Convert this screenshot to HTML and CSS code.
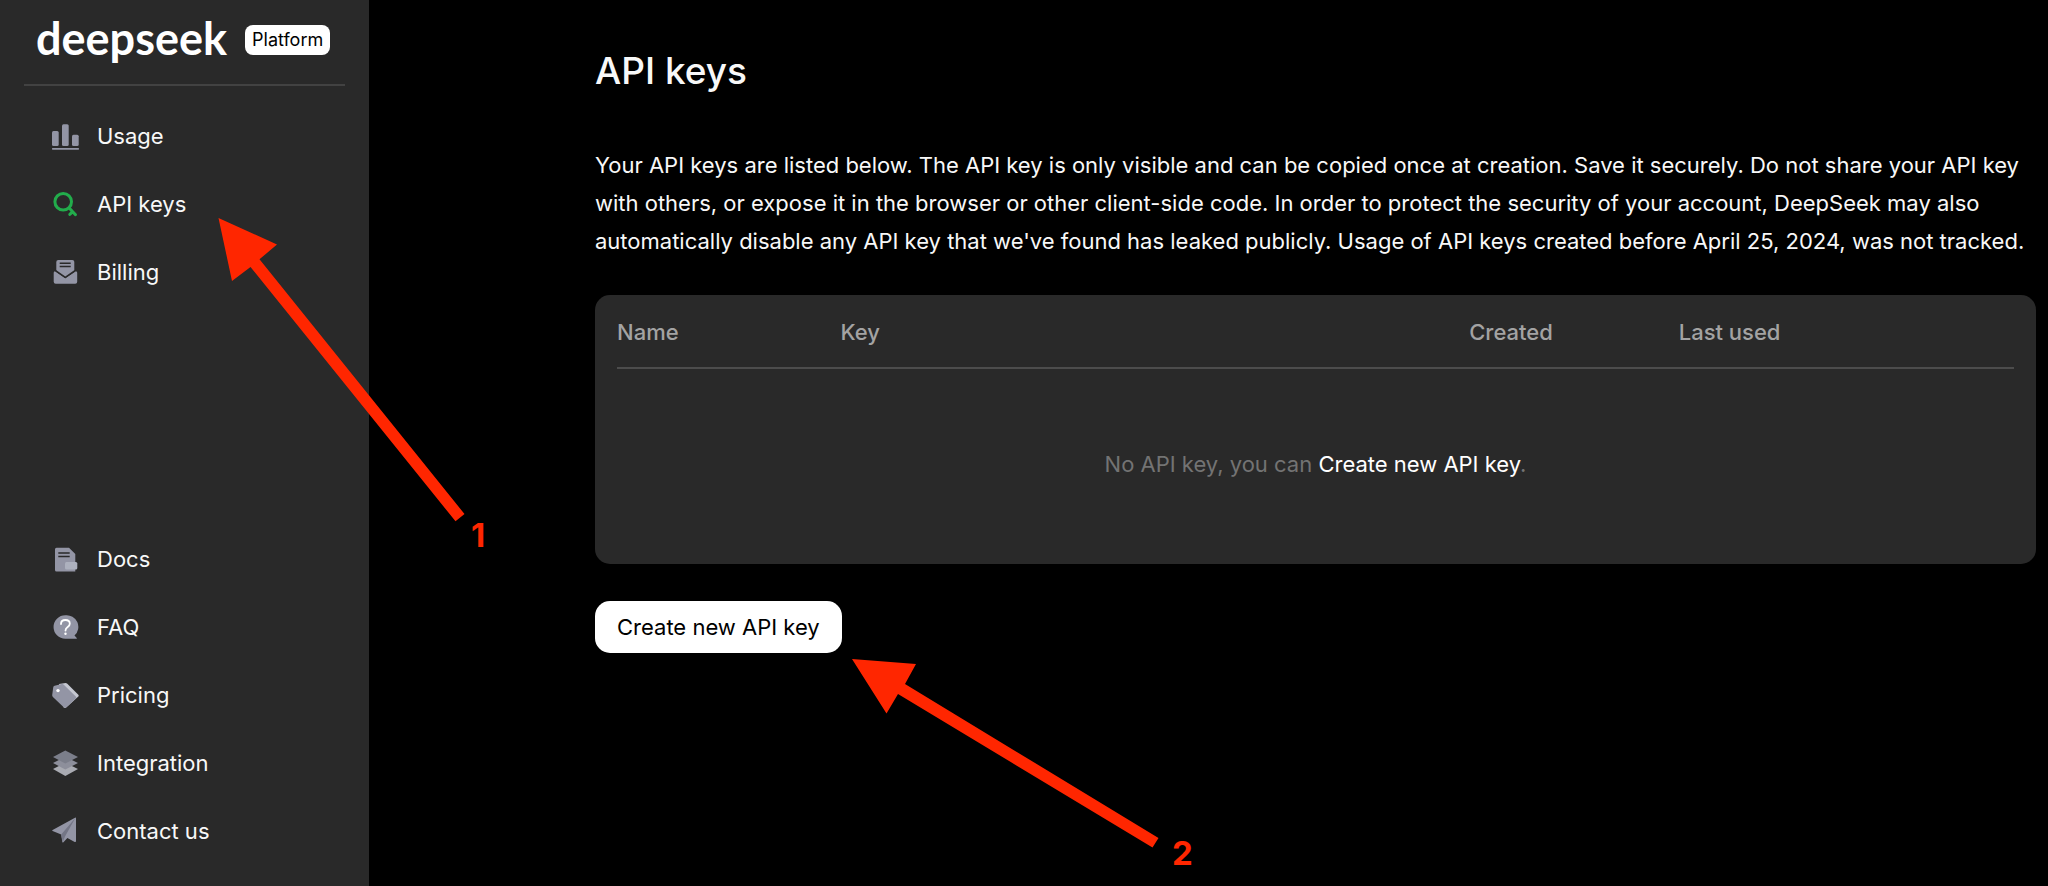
FILE: index.html
```html
<!DOCTYPE html>
<html lang="en">
<head>
<meta charset="utf-8">
<title>DeepSeek Platform</title>
<link rel="stylesheet" href="styles.css">
</head>
<body>
<div class="app">
  <aside class="sidebar">
    <div class="brand">
      <span class="wordmark">deepseek</span>
      <span class="badge">Platform</span>
    </div>
    <nav class="nav">
      <a class="nav-item" href="#usage">
        <svg class="icon" viewBox="0 0 28 28"><rect x="1" y="9" width="6.7" height="15" rx="1.5"/><rect x="11" y="2.3" width="6.7" height="21.7" rx="1.5"/><rect x="21" y="12.7" width="6.7" height="11.3" rx="1.5"/><rect x="1" y="26" width="27" height="1.7" rx=".6"/></svg>
        Usage
      </a>
      <a class="nav-item" href="#keys" aria-current="page">
        <svg class="icon icon-active" viewBox="0 0 28 28"><circle cx="12.2" cy="11.8" r="8.300"/><path d="M18.200 17.900l6.300 6.800M21.700 21.700l-2.900 2.700"/></svg>
        API keys
      </a>
      <a class="nav-item" href="#billing">
        <svg class="icon" viewBox="0 0 28 28"><path d="M7.3 2h14q2 0 2 2v9.2l-9 6.1-9-6.1V4q0-2 2-2z"/><path d="M4 13.3l10.3 7 10.5-7q1.4 0 1.4 1.5v9q0 2-2 2H4.7q-2 0-2-2v-9q0-1.5 1.3-1.5z"/><path class="cut" d="M8.7 5.3h11M8.7 8.5h11"/><path class="cut" d="M4.6 12.7l9.7 6.6 9.7-6.6"/></svg>
        Billing
      </a>
    </nav>
    <nav class="nav nav-bottom">
      <a class="nav-item" href="#docs">
        <svg class="icon" viewBox="0 0 28 28"><path d="M5.500 2.700H18L24.300 9v17.500H5.500Q4 26.500 4 25V4.200q0-1.500 1.500-1.500z"/><path class="cut" d="M7.300 8h11.400M7.300 11.500h11.400"/><rect class="light" x="14" y="17" width="12.300" height="7.500" rx="1.500"/></svg>
        Docs
      </a>
      <a class="nav-item" href="#faq">
        <svg class="icon" viewBox="0 0 28 28"><path d="M14.300 2.300a11.700 11.700 0 1 0 0 23.500H25.500q.8-.6 0-1.100l-2-2.100A11.700 11.700 0 0 0 14.300 2.300z"/><path class="mark" d="M10 11q0-4 4.400-4t4.400 3.700q0 1.700-2.100 3.200-2.200 1.500-2.200 3.600"/><circle class="dot" cx="14.500" cy="20.800" r="1.200"/></svg>
        FAQ
      </a>
      <a class="nav-item" href="#pricing">
        <svg class="icon" viewBox="0 0 28 28"><path class="edge" d="M8 2.900l6.600-.8q1 0 1.700.7l11 11q.8.900 0 1.700L15.500 26.300q-1.500 1.300-3 0z"/><path d="M3.600 4.800l7.300-1.700q1.100-.2 1.900.6L25 15.700q.7.800 0 1.500l-9.700 9q-1.300 1-2.600 0L1.900 16q-.8-.8-.7-2l1-7.500q.2-1.400 1.400-1.700z"/><circle class="dot" cx="7" cy="9.600" r="1.700"/></svg>
        Pricing
      </a>
      <a class="nav-item" href="#integration">
        <svg class="icon" viewBox="0 0 28 28"><path class="layer-low" d="M14.300 13.800L27 20l-12.700 7L2 20z"/><path class="layer-mid" d="M14.300 7.700L27 14l-12.700 6.500L2 14z"/><path class="layer-top" d="M14.300 1.600L27 8l-12.700 6.500L2 8z"/></svg>
        Integration
      </a>
      <a class="nav-item" href="#contact">
        <svg class="icon" viewBox="0 0 28 28"><path d="M24 .7q1-.4 1 .6V24q0 1.500-1.300.9L16.400 21l-4 4.200q-1.100.7-1.200-.6l-1-7L1.600 14q-1-.6 0-1.100z"/><path class="fold" d="M24.300 1L10.200 17.600l1.500 7.600L14 19.400z"/></svg>
        Contact us
      </a>
    </nav>
  </aside>

  <main class="main">
    <h1 class="title">API keys</h1>
    <p class="intro">Your API keys are listed below. The API key is only visible and can be copied once at creation. Save it securely. Do not share your API key with others, or expose it in the browser or other client-side code. In order to protect the security of your account, DeepSeek may also automatically disable any API key that we've found has leaked publicly. Usage of API keys created before April 25, 2024, was not tracked.</p>
    <section class="card">
      <table class="keys">
        <colgroup><col class="col-name"><col class="col-key"><col class="col-created"><col class="col-used"></colgroup>
        <thead>
          <tr><th scope="col">Name</th><th scope="col">Key</th><th scope="col">Created</th><th scope="col">Last used</th></tr>
        </thead>
        <tbody>
          <tr><td class="empty" colspan="4">No API key, you can <a class="empty-link" href="#create">Create new API key</a>.</td></tr>
        </tbody>
      </table>
    </section>
    <button class="create" type="button">Create new API key</button>
  </main>

  <svg class="annotations" width="1240" height="886" viewBox="0 0 1240 886">
    <path d="M218.500 218L277 244.500 259.500 259.300 464.500 514 455.500 521.300 250.500 267 232 281z"/>
    <text x="471" y="547">1</text>
    <path d="M852 659L916 664 905 684 1158.500 838 1152.500 847.500 898 694 886.500 713.500z"/>
    <text x="1172" y="865">2</text>
  </svg>
</div>
</body>
</html>
```
FILE: styles.css
```css
* {
  box-sizing: border-box;
}

body {
  margin: 0;
  background: #000;
  color: #f8f8f8;
  font-family: Inter, "Liberation Sans", sans-serif;
  font-size: 22px;
}

.app {
  position: relative;
  display: flex;
  min-height: 100vh;
}

/* Sidebar */
.sidebar {
  display: flex;
  flex-direction: column;
  flex: none;
  width: 369px;
  padding: 0 24px 21px;
  background: #292929;
}

.brand {
  display: flex;
  align-items: center;
  gap: 18px;
  height: 86px;
  padding: 0 12px 4px;
  border-bottom: 2px solid #424242;
}

.wordmark {
  padding-bottom: 4px;
  color: #fff;
  font-family: Lato, sans-serif;
  font-size: 45px;
  font-weight: 700;
  line-height: 48px;
}

.badge {
  padding: 0 7px;
  border-radius: 8px;
  background: #fff;
  color: #000;
  font-size: 18px;
  line-height: 30px;
}

.nav {
  display: flex;
  flex-direction: column;
  padding-top: 16px;
}

.nav-bottom {
  margin-top: auto;
}

.nav-item {
  display: flex;
  align-items: center;
  gap: 18px;
  height: 68px;
  padding-left: 27px;
  color: inherit;
  text-decoration: none;
}

.icon {
  flex: none;
  width: 28px;
  height: 28px;
  fill: #9395a5;
}

.icon-active {
  fill: none;
  stroke: #22ac4b;
  stroke-width: 3;
  stroke-linecap: round;
}

.cut {
  fill: none;
  stroke: #292929;
  stroke-width: 1.5;
}

.mark {
  fill: none;
  stroke: #fff;
  stroke-width: 1.8;
  stroke-linecap: round;
}

.dot {
  fill: #fff;
}

.light {
  fill: #adb1be;
}

.edge {
  fill: #c6c8d2;
}

.layer-low {
  fill: #a9abb2;
}

.layer-mid {
  fill: #8d8f9b;
}

.layer-top {
  fill: #7b7e8a;
}

.fold {
  fill: #747686;
}

/* Main content */
.main {
  flex: 1;
  min-width: 0;
  padding: 47px 12px 0 226px;
}

.title {
  margin: 0;
  font-size: 37px;
  font-weight: 500;
  line-height: 48px;
}

.intro {
  margin: 51px 0 35px;
  line-height: 38px;
}

.card {
  padding: 0 22px 6px;
  border-radius: 15px;
  background: #292929;
}

.keys {
  width: 100%;
  border-collapse: collapse;
  table-layout: fixed;
}

.col-name {
  width: 16%;
}

.col-key {
  width: 45%;
}

.col-created {
  width: 15%;
}

.keys th {
  height: 73px;
  padding: 2px 0 0;
  border-bottom: 2px solid #4c4c4c;
  color: #a3a3a3;
  font-weight: 500;
  text-align: left;
}

.keys .empty {
  height: 190px;
  padding: 0;
  color: #737373;
  text-align: center;
}

.empty-link {
  color: #fff;
  text-decoration: none;
}

.create {
  height: 52px;
  margin-top: 37px;
  padding: 0 22px;
  border: 0;
  border-radius: 15px;
  background: #fff;
  color: #000;
  font: inherit;
}

/* Step arrows drawn over the page */
.annotations {
  position: absolute;
  top: 0;
  left: 0;
  fill: #ff2600;
  font-size: 33px;
  font-weight: 700;
  pointer-events: none;
}
```
